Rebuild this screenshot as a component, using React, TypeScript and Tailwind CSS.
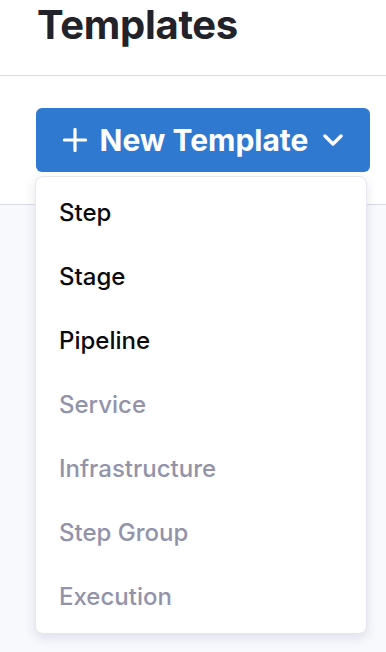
import { useState } from "react";

//------->Menu items [first three are enabled]<---------
const templateTypes = [
  { label: "Step", enabled: true },
  { label: "Stage", enabled: true },
  { label: "Pipeline", enabled: true },
  { label: "Service", enabled: false },
  { label: "Infrastructure", enabled: false },
  { label: "Step Group", enabled: false },
  { label: "Execution", enabled: false },
];

const PlusIcon = () => (
  <svg width="24" height="24" viewBox="0 0 24 24" fill="none">
    <path d="M12 1.5v21M1.5 12h21" stroke="white" strokeWidth="3.2" strokeLinecap="round" />
  </svg>
);

const ChevronIcon = () => (
  <svg width="20" height="13" viewBox="0 0 20 13" fill="none">
    <path d="M2 2l8 8 8-8" stroke="white" strokeWidth="3.4" strokeLinecap="round" strokeLinejoin="round" />
  </svg>
);

const App = () => {
  const [open, setOpen] = useState(true);

  return (
    <div className="min-h-screen bg-[#f8f9fd] font-['Inter','Noto_Sans',sans-serif]">
      <div className="bg-white border-b border-[#d9dae5] px-[37px] pt-[5px] pb-[30px]">
        <h1 className="text-[40px] leading-[40px] font-bold text-[#22222a] tracking-[-0.3px]">Templates</h1>
      </div>
      <div className="bg-white border-b border-[#d9dae5] px-[36px] pt-[32px] pb-[32px]">
        <div className="relative w-[334px]">
          <button
            onClick={() => setOpen(!open)}
            className="w-full h-[64px] flex items-center justify-center rounded-[6px] bg-[#3079d0] text-white"
          >
            <PlusIcon />
            <span className="ml-[13px] mr-[15px] text-[30px] font-bold leading-none">New Template</span>
            <ChevronIcon />
          </button>
          {open && (
            <div className="absolute left-[-1px] top-[68px] z-10 w-[332px] rounded-[8px] border border-[#e6e6ee] bg-white pt-[4px] pb-[4px] shadow-[0_4px_12px_rgba(30,40,80,0.12)]">
              {templateTypes.map((t, i) => (
                <div
                  key={i}
                  className={`h-[64px] pl-[23px] flex items-center text-[24px] font-medium ${
                    t.enabled ? "text-[#0b0b0d] cursor-pointer" : "text-[#9293ab]"
                  }`}
                >
                  {t.label}
                </div>
              ))}
            </div>
          )}
        </div>
      </div>
    </div>
  );
};

export default App;
